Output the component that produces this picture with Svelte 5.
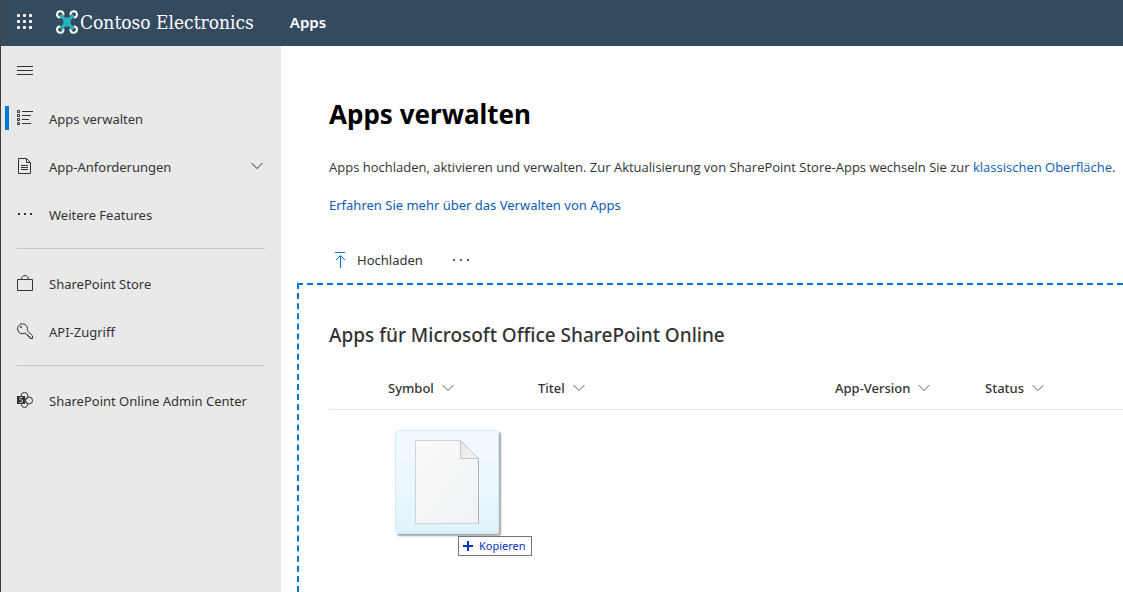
<script>
  const navGroups = [
    [
      { label: 'Apps verwalten', icon: 'list', active: true },
      { label: 'App-Anforderungen', icon: 'document', expandable: true },
      { label: 'Weitere Features', icon: 'more' },
    ],
    [
      { label: 'SharePoint Store', icon: 'bag' },
      { label: 'API-Zugriff', icon: 'key' },
    ],
    [{ label: 'SharePoint Online Admin Center', icon: 'sharepoint' }],
  ];

  const columns = [
    { label: 'Symbol', name: 'symbol' },
    { label: 'Titel', name: 'title' },
    { label: 'App-Version', name: 'version' },
    { label: 'Status', name: 'status' },
  ];

  let navOpen = $state(true);
</script>

{#snippet chevron()}
  <svg class="chevron" width="12" height="8" viewBox="0 0 12 8" aria-hidden="true">
    <path d="M.5 1 6 6.5 11.5 1" />
  </svg>
{/snippet}

{#snippet navIcon(name)}
  <svg class="nav-icon" width="16" height="16" viewBox="0 0 16 16" aria-hidden="true">
    {#if name === 'list'}
      <path d="M.5.5h2v2h-2zM.5 4.5h2v2h-2zM.5 8.5h2v2h-2zM.5 12.5h2v2h-2zM5 1.5h11M5 5.5h9M5 9.5h7M5 13.5h9" />
    {:else if name === 'document'}
      <path d="M1.500.5h8l4 4v11h-12zM9.500.5v4h4M4 7.500h7M4 9.500h7M4 11.500h7" />
    {:else if name === 'more'}
      <path class="solid" d="M1 7h2v2H1zM7 7h2v2H7zM13 7h2v2h-2z" />
    {:else if name === 'bag'}
      <path d="M.5 4.500h15v11H.5zM4.500 4.500C4.500 2 6 .5 8 .5s3.500 1.500 3.500 4" />
    {:else if name === 'key'}
      <path d="M8.300 9.900A5 5 0 1 1 10.200 7.500L15.500 12.800v2.700h-2.500v-1.800h-1.800v-1.800H9.500z" />
      <circle class="solid" cx="4" cy="4" r="1" />
    {:else}
      <circle cx="7.500" cy="4" r="3.500" />
      <circle cx="12" cy="8.500" r="3.500" />
      <circle cx="7.500" cy="12.500" r="3" />
      <path class="solid" d="M0 4h8v8H0z" />
      <path class="mark" d="M5.500 5.500H3.500Q2.500 5.500 2.500 6.500T3.500 7.800H4.500Q5.500 7.800 5.500 9T4.500 10.500H2.500" />
    {/if}
  </svg>
{/snippet}

<div class="page">
  <header>
    <button class="launcher" aria-label="App-Startfeld">
      <svg width="16" height="16" viewBox="0 0 16 16">
        {#each [0, 6, 12] as y}
          {#each [0, 6, 12] as x}
            <rect {x} {y} width="3" height="3" rx="1" />
          {/each}
        {/each}
      </svg>
    </button>
    <a class="brand" href="#home">
      <svg width="22" height="24" viewBox="0 0 22 24" aria-hidden="true">
        <path class="rotors" d="M3.500 7.500A3.200 3.200 0 1 1 7.500 4.500M18.500 7.500A3.200 3.200 0 1 0 14.500 4.500M3.500 16.500A3.200 3.200 0 1 0 7.500 19.500M18.500 16.500A3.200 3.200 0 1 1 14.500 19.500" />
        <path class="arms" d="M4.500 5 17.500 19M17.500 5 4.500 19" />
        <path class="body" d="M8 7.500h6l1 2-.5 2.500.5 2.500-1 2H8l-1-2 .5-2.500L7 9.500z" />
      </svg>
      <span>Contoso Electronics</span>
    </a>
    <a class="app-name" href="#apps">Apps</a>
  </header>

  <div class="layout">
    <nav>
      <button class="toggle" aria-label="Navigation" onclick={() => navOpen = !navOpen}>
        <svg class="nav-icon" width="16" height="16" viewBox="0 0 16 16">
          <path d="M0 4.500h16M0 8.500h16M0 12.500h16" />
        </svg>
      </button>
      {#if navOpen}
        {#each navGroups as group}
          <ul>
            {#each group as item}
              <li>
                <a class="nav-link" class:active={item.active} href="#{item.icon}">
                  {@render navIcon(item.icon)}
                  <span>{item.label}</span>
                  {#if item.expandable}
                    {@render chevron()}
                  {/if}
                </a>
              </li>
            {/each}
          </ul>
        {/each}
      {/if}
    </nav>

    <main>
      <section class="intro">
        <h1>Apps verwalten</h1>
        <p class="lead">
          Apps hochladen, aktivieren und verwalten. Zur Aktualisierung von SharePoint Store-Apps wechseln Sie zur
          <a href="#classic">klassischen Oberfläche</a>.
        </p>
        <p><a href="#learn">Erfahren Sie mehr über das Verwalten von Apps</a></p>
      </section>

      <div class="commands">
        <button class="upload">
          <svg width="12" height="16" viewBox="0 0 12 16" aria-hidden="true">
            <path d="M1 .5h10M6.500 16V3.500M2 8l4.500-4.500L11 8" />
          </svg>
          Hochladen
        </button>
        <button class="more" aria-label="Weitere Befehle">
          <svg width="16" height="2" viewBox="0 0 16 2">
            <path d="M0 0h2v2H0zM7 0h2v2H7zM14 0h2v2h-2z" />
          </svg>
        </button>
      </div>

      <section class="dropzone">
        <h2>Apps für Microsoft Office SharePoint Online</h2>
        <table>
          <thead>
            <tr>
              <th class="select"></th>
              {#each columns as column}
                <th class={column.name}>
                  <button>{column.label} {@render chevron()}</button>
                </th>
              {/each}
            </tr>
          </thead>
        </table>

        <div class="drag">
          <svg width="64" height="84" viewBox="0 0 64 84" aria-hidden="true">
            <defs>
              <linearGradient id="sheet" x1="0" y1="0" x2="1" y2="1">
                <stop offset="0" stop-color="#f9fafb" />
                <stop offset="1" stop-color="#eff3f5" />
              </linearGradient>
              <linearGradient id="fold" x1="0" y1="0" x2="1" y2="1">
                <stop offset="0" stop-color="#e3e5e7" />
                <stop offset="1" stop-color="#f5f5f5" />
              </linearGradient>
            </defs>
            <path d="M.5.5h45l18 18v65H.5z" fill="url(#sheet)" stroke="#cfd3d6" />
            <path d="M45.500.5v18h18z" fill="url(#fold)" stroke="#c3c7ca" />
            <path d="M63.500 18.500v65" stroke="#adb4b9" />
          </svg>
          <span class="hint">
            <svg width="10" height="10" viewBox="0 0 10 10" aria-hidden="true">
              <path d="M5 0v10M0 5h10" />
            </svg>
            Kopieren
          </span>
        </div>
      </section>
    </main>
  </div>
</div>

<style>
  :global(body) {
    margin: 0;
    background: #fff;
  }
  .page {
    display: flex;
    flex-direction: column;
    min-height: 100vh;
    box-sizing: border-box;
    border-left: 1px solid #414141;
    overflow: hidden;
    font-family: "Noto Sans", "Open Sans", sans-serif;
    font-size: 13px;
    line-height: 20px;
    color: #333;
  }
  a {
    color: #0b5cb8;
    text-decoration: none;
  }
  button {
    padding: 0;
    border: none;
    background: none;
    color: inherit;
    font: inherit;
    cursor: pointer;
  }
  svg {
    display: block;
    flex-shrink: 0;
    fill: none;
  }

  header {
    display: flex;
    align-items: center;
    height: 46px;
    padding-bottom: 2px;
    box-sizing: border-box;
    background: #344a5f;
  }
  .launcher {
    display: flex;
    align-items: center;
    justify-content: center;
    width: 48px;
    height: 44px;
  }
  .launcher svg {
    fill: #fff;
  }
  .brand {
    display: flex;
    align-items: center;
    gap: 2px;
    margin-left: 7px;
    color: #fff;
    font-family: "DejaVu Serif Condensed", "DejaVu Serif", serif;
    font-size: 19px;
    line-height: 24px;
    white-space: nowrap;
  }
  .rotors {
    stroke: #fff;
    stroke-width: 2;
    stroke-linecap: round;
  }
  .arms {
    stroke: #26b5bd;
    stroke-width: 3;
  }
  .body {
    fill: #26b5bd;
  }
  .app-name {
    margin-left: 36px;
    color: #fff;
    font-size: 15px;
    font-weight: 600;
  }

  .layout {
    display: flex;
    flex: 1;
  }
  nav {
    flex: 0 0 280px;
    box-sizing: border-box;
    background: #e9e9e9;
  }
  .toggle,
  .nav-link {
    display: flex;
    align-items: center;
    height: 48px;
    padding: 0 16px;
  }
  .nav-icon {
    stroke: #333;
  }
  .solid {
    fill: #333;
    stroke: none;
  }
  .mark {
    stroke: #ddd;
  }
  ul {
    margin: 0;
    padding: 0;
    list-style: none;
  }
  ul + ul {
    position: relative;
    padding-top: 21px;
  }
  ul + ul::before {
    content: "";
    position: absolute;
    top: 10px;
    left: 16px;
    right: 16px;
    height: 1px;
    background: #c6c6c6;
  }
  .nav-link {
    position: relative;
    gap: 16px;
    color: #333;
  }
  .nav-link span {
    padding-top: 2px;
  }
  .active::before {
    content: "";
    position: absolute;
    left: 4px;
    top: 12px;
    width: 4px;
    height: 24px;
    background: #0078d4;
  }
  .chevron {
    stroke: #605e5c;
  }
  .nav-link .chevron {
    margin: 0 2px 0 auto;
    stroke: #333;
  }

  main {
    display: flex;
    flex: 1;
    flex-direction: column;
    min-width: 0;
    padding-left: 16px;
  }
  .intro {
    padding: 48px 0 4px 32px;
  }
  h1 {
    margin: 0 0 23px;
    color: #000;
    font-size: 26px;
    font-weight: 700;
    line-height: 40px;
  }
  p {
    margin: 0 0 18px;
    white-space: nowrap;
  }
  .lead {
    font-family: "Open Sans", "Noto Sans", sans-serif;
  }
  .commands {
    display: flex;
    align-items: center;
    gap: 30px;
    height: 46px;
    padding-left: 37px;
  }
  .upload {
    display: flex;
    align-items: center;
    gap: 11px;
  }
  .upload svg {
    stroke: #0078d4;
  }
  .more svg {
    fill: #605e5c;
  }

  .dropzone {
    position: relative;
    flex: 1;
    padding: 36px 0 0 30px;
    border: 2px dashed #0078d4;
    border-width: 2px 0 0 2px;
  }
  h2 {
    margin: 0 0 20px;
    font-size: 19px;
    font-weight: 500;
    line-height: 28px;
  }
  table {
    width: 100%;
    table-layout: fixed;
    border-collapse: collapse;
  }
  th {
    height: 38px;
    padding: 0 0 2px;
    border-bottom: 1px solid #e8e8e8;
    text-align: left;
  }
  th button {
    display: flex;
    align-items: center;
    gap: 8px;
    font-weight: 500;
  }
  .select {
    width: 59px;
  }
  .symbol {
    width: 150px;
  }
  .title {
    width: 297px;
  }
  .version {
    width: 150px;
  }

  .drag {
    position: absolute;
    top: 145px;
    left: 96px;
    display: flex;
    align-items: center;
    justify-content: center;
    width: 102px;
    height: 102px;
    border: 1px solid #d3edf9;
    border-radius: 3px;
    background: linear-gradient(#f3fbff, #eaf7fe 60%, #dff2fb);
    box-shadow: 2px 2px 2px rgba(0, 0, 0, 0.35);
  }
  .hint {
    position: absolute;
    top: 105px;
    left: 62px;
    display: flex;
    align-items: center;
    gap: 6px;
    padding: 0 5px 0 4px;
    border: 1px solid #767676;
    background: #fff;
    color: #0033bb;
    font-size: 11px;
    line-height: 18px;
  }
  .hint svg {
    stroke: #0033cc;
    stroke-width: 2;
  }
</style>
